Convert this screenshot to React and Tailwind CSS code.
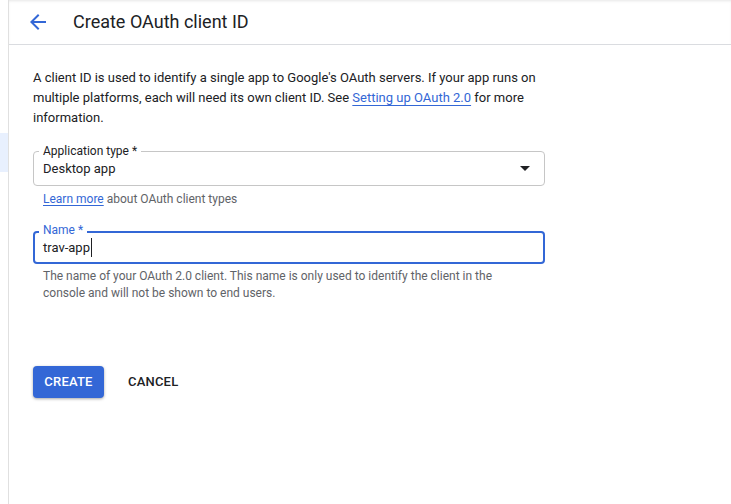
import React from "react";

export default function App() {
  return (
    <div className="flex h-[504px] w-[731px] overflow-hidden bg-white text-[#202124]" style={{ fontFamily: "Roboto, 'Liberation Sans', sans-serif" }}>
      <div className="flex w-[9px] shrink-0 flex-col border-r border-[#e0e0e0]">
        <div className="h-[133px]" />
        <div className="h-[39px] bg-[#e8f0fe]" />
      </div>
      <div className="flex min-w-0 flex-1 flex-col">
        <div className="flex h-[45px] shrink-0 items-center border-b border-[#dadce0] shadow-[inset_0_2px_3px_-1px_rgba(0,0,0,0.10)]">
          <div className="ml-[17px] flex h-[24px] w-[24px] items-center justify-center">
            <svg width="24" height="24" viewBox="0 0 24 24" fill="#3367d6">
              <path d="M20 11H7.83l5.59-5.59L12 4l-8 8 8 8 1.41-1.41L7.83 13H20v-2z" />
            </svg>
          </div>
          <div className="ml-[23px] text-[18px] leading-[24px] text-[#202124]">Create OAuth client ID</div>
        </div>
        <div className="flex flex-col pl-[24px] pt-[23px]">
          <p className="w-[512px] text-[13px] leading-[20px] text-[#202124]">
            A client ID is used to identify a single app to Google's OAuth servers. If your app runs on multiple platforms, each will need its own client ID. See{" "}
            <span className="text-[#3367d6] underline decoration-[#3367d6] underline-offset-[3px]">Setting up OAuth 2.0</span> for more information.
          </p>

          <div className="relative mt-[23px] flex h-[35px] w-[512px] items-center rounded-[4px] border border-[#c6c6c6] pl-[9px] pr-[14px]">
            <span className="absolute -top-[8px] left-[5px] bg-white px-[4px] text-[12px] leading-[14px] text-[#202124]">Application type *</span>
            <span className="flex-1 text-[13px] leading-[20px] text-[#202124]">Desktop app</span>
            <svg width="10" height="5" viewBox="0 0 10 5" fill="#202124">
              <path d="M0 0l5 5 5-5z" />
            </svg>
          </div>
          <div className="mt-[5px] pl-[10px] text-[12px] leading-[16px] text-[#5f6368]">
            <span className="text-[#3367d6] underline decoration-[#3367d6] underline-offset-[2px]">Learn more</span> about OAuth client types
          </div>

          <div className="relative mt-[24px] flex h-[33px] w-[512px] items-center rounded-[4px] border-2 border-[#3367d6] pl-[8px]">
            <span className="absolute -top-[10px] left-[4px] bg-white px-[4px] text-[12px] leading-[14px] text-[#3367d6]">Name *</span>
            <span className="text-[13px] leading-[20px] text-[#202124]">trav-app</span>
            <span className="ml-[1px] h-[19px] w-[1px] bg-[#202124]" />
          </div>
          <div className="mt-[4px] w-[480px] pl-[10px] text-[12px] leading-[17px] text-[#5f6368]">
            The name of your OAuth 2.0 client. This name is only used to identify the client in the console and will not be shown to end users.
          </div>

          <div className="mt-[64px] flex items-center">
            <button className="flex h-[32px] w-[71px] items-center justify-center rounded-[4px] bg-[#3367d6] text-[13px] font-medium tracking-[0.2px] text-white shadow-[0_1px_3px_rgba(0,0,0,0.35)]">
              CREATE
            </button>
            <button className="ml-[24px] text-[13px] font-medium tracking-[0.2px] text-[#202124]">CANCEL</button>
          </div>
        </div>
      </div>
    </div>
  );
}
